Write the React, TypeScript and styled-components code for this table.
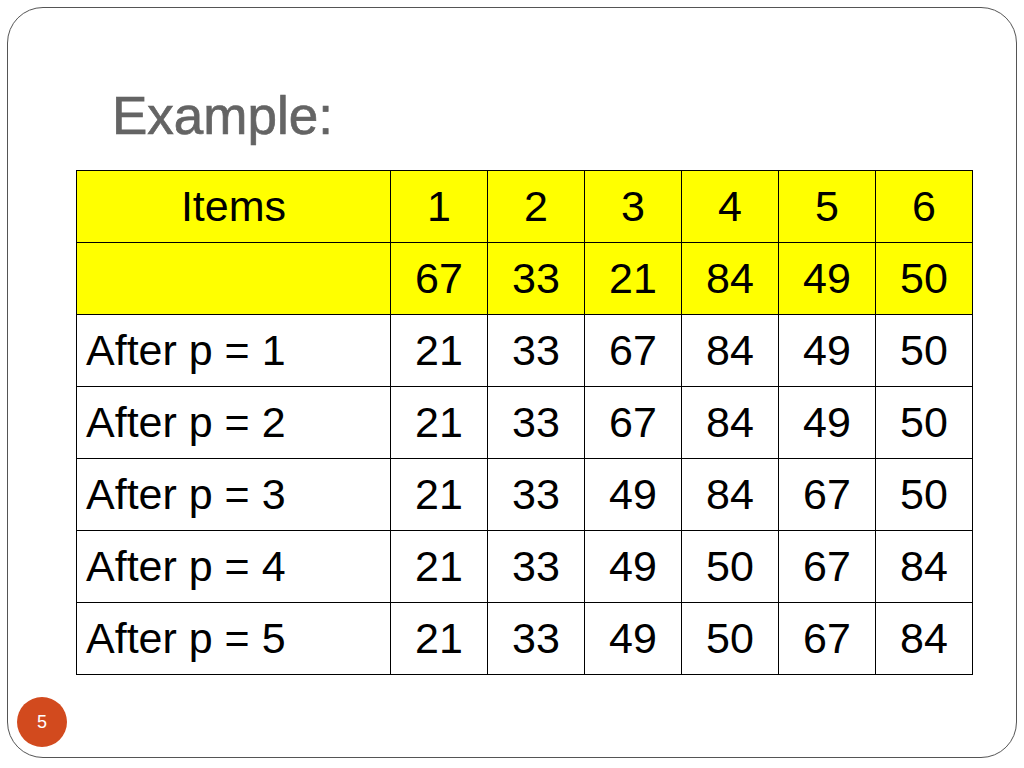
import React from "react";
import styled, { createGlobalStyle } from "styled-components";

const Global = createGlobalStyle`
  html, body { margin: 0; padding: 0; background: #ffffff; }
  body { font-family: "Liberation Sans", Arial, sans-serif; }
`;

const Frame = styled.div`
  box-sizing: border-box;
  margin: 7px;
  width: 1010px;
  height: 751px;
  border: 1px solid #555555;
  border-radius: 36px;
  display: flex;
  flex-direction: column;
  padding: 81px 0 10px 0;
`;

const Title = styled.h1`
  margin: 0;
  padding-left: 104px;
  font-family: "Liberation Sans", Arial, sans-serif;
  font-weight: normal;
  font-size: 53px;
  line-height: 54px;
  color: #646464;
  -webkit-text-stroke: 0.7px #646464;
`;

const Table = styled.table`
  margin: 27px 0 0 68px;
  width: 897px;
  table-layout: fixed;
  border-collapse: collapse;
  font-family: "Liberation Sans", Arial, sans-serif;
  font-size: 43px;
  color: #000000;
`;

const Row = styled.tr<{ $head?: boolean }>`
  height: 72px;
  background: ${(p) => (p.$head ? "#ffff00" : "#ffffff")};
`;

const Cell = styled.td<{ $label?: boolean; $center?: boolean }>`
  border: 1px solid #000000;
  padding: 0 0 0 ${(p) => (p.$label && !p.$center ? "9px" : "0")};
  text-align: ${(p) => (p.$label && !p.$center ? "left" : "center")};
  vertical-align: middle;
  line-height: 1;
  white-space: nowrap;
`;

const Footer = styled.div`
  margin-top: auto;
  padding-left: 9px;
`;

const Badge = styled.div`
  width: 50px;
  height: 50px;
  border-radius: 50%;
  background: #d24a1e;
  color: #ffffff;
  font-family: "Liberation Sans", Arial, sans-serif;
  font-size: 18px;
  display: flex;
  align-items: center;
  justify-content: center;
`;

const rows: [string, number[]][] = [
  ["After p = 1", [21, 33, 67, 84, 49, 50]],
  ["After p = 2", [21, 33, 67, 84, 49, 50]],
  ["After p = 3", [21, 33, 49, 84, 67, 50]],
  ["After p = 4", [21, 33, 49, 50, 67, 84]],
  ["After p = 5", [21, 33, 49, 50, 67, 84]],
];

export default function App() {
  return (
    <>
      <Global />
      <Frame>
        <Title>Example:</Title>
        <Table>
          <colgroup>
            <col style={{ width: 314 }} />
            {[0, 1, 2, 3, 4, 5].map((i) => (
              <col key={i} style={{ width: 97 }} />
            ))}
          </colgroup>
          <tbody>
            <Row $head>
              <Cell $label $center>Items</Cell>
              {[1, 2, 3, 4, 5, 6].map((n) => (
                <Cell key={n}>{n}</Cell>
              ))}
            </Row>
            <Row $head>
              <Cell $label $center></Cell>
              {[67, 33, 21, 84, 49, 50].map((n, i) => (
                <Cell key={i}>{n}</Cell>
              ))}
            </Row>
            {rows.map(([label, vals]) => (
              <Row key={label}>
                <Cell $label>{label}</Cell>
                {vals.map((v, i) => (
                  <Cell key={i}>{v}</Cell>
                ))}
              </Row>
            ))}
          </tbody>
        </Table>
        <Footer>
          <Badge>5</Badge>
        </Footer>
      </Frame>
    </>
  );
}
